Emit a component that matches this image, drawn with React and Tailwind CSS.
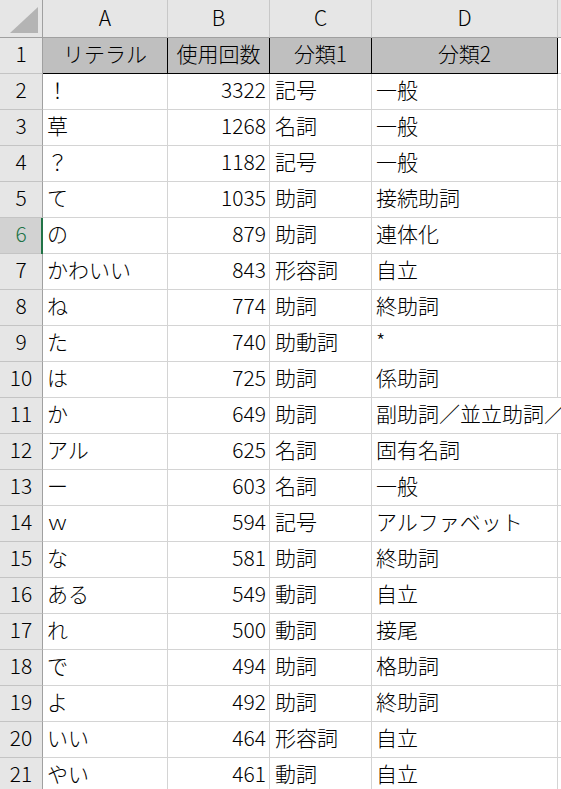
import React from "react";

const rows = [
  ["！", "3322", "記号", "一般"],
  ["草", "1268", "名詞", "一般"],
  ["？", "1182", "記号", "一般"],
  ["て", "1035", "助詞", "接続助詞"],
  ["の", "879", "助詞", "連体化"],
  ["かわいい", "843", "形容詞", "自立"],
  ["ね", "774", "助詞", "終助詞"],
  ["た", "740", "助動詞", "*"],
  ["は", "725", "助詞", "係助詞"],
  ["か", "649", "助詞", "副助詞／並立助詞／終助詞"],
  ["アル", "625", "名詞", "固有名詞"],
  ["ー", "603", "名詞", "一般"],
  ["ｗ", "594", "記号", "アルファベット"],
  ["な", "581", "助詞", "終助詞"],
  ["ある", "549", "動詞", "自立"],
  ["れ", "500", "動詞", "接尾"],
  ["で", "494", "助詞", "格助詞"],
  ["よ", "492", "助詞", "終助詞"],
  ["いい", "464", "形容詞", "自立"],
  ["やい", "461", "動詞", "自立"],
];

const gridCols = "grid grid-cols-[43px_125px_102px_102px_186px_1fr]";

export default function App() {
  return (
    <div
      className="w-[561px] h-[789px] overflow-hidden bg-white text-black text-[21px] font-light"
      style={{ fontFamily: '"Noto Sans CJK JP", "Noto Sans", sans-serif' }}
    >
      {/* column headers */}
      <div className={`${gridCols} h-[38px] bg-[#e6e6e6] leading-[34px]`}>
        <div className="border-r border-b border-[#a0a0a0] relative">
          <svg className="absolute right-[4px] bottom-[4px]" width="28" height="26" viewBox="0 0 28 26">
            <polygon points="28,0 28,26 0,26" fill="#b4b4b4" />
          </svg>
        </div>
        {["A", "B", "C", "D"].map((c) => (
          <div key={c} className="text-center border-r border-[#c8c8c8] border-b border-b-[#a0a0a0]">
            {c}
          </div>
        ))}
        <div className="border-b border-[#a0a0a0]" />
      </div>

      {/* row 1 header */}
      <div className={`${gridCols} h-[36px] leading-[31px]`}>
        <div className="bg-[#e6e6e6] text-center border-r border-r-[#a0a0a0] border-b border-b-[#c4c4c4]">1</div>
        <div className="bg-[#bfbfbf] text-center border-r border-b border-black">リテラル</div>
        <div className="bg-[#bfbfbf] text-center border-r border-b border-black">使用回数</div>
        <div className="bg-[#bfbfbf] text-center border-r border-b border-black">分類1</div>
        <div className="bg-[#bfbfbf] text-center border-r border-b border-black">分類2</div>
        <div className="border-b border-[#d4d4d4]" />
      </div>

      {rows.map((r, i) => {
        const n = i + 2;
        const sel = n === 6;
        const overflow = n === 11;
        return (
          <div key={n} className={`${gridCols} h-[36px] leading-[31px]`}>
            <div
              className={`text-center border-r border-r-[#a0a0a0] border-b border-b-[#c4c4c4] relative ${
                sel ? "bg-[#d2d2d2] text-[#217346]" : "bg-[#e6e6e6]"
              }`}
            >
              {n}
              {sel && <span className="absolute right-[-1px] top-0 w-[2px] h-[36px] bg-[#217346]" />}
            </div>
            <div className="pl-[4px] border-r border-b border-[#d4d4d4] whitespace-nowrap overflow-hidden">{r[0]}</div>
            <div className="pr-[3px] text-right border-r border-b border-[#d4d4d4]">{r[1]}</div>
            <div className="pl-[5px] border-r border-b border-[#d4d4d4] whitespace-nowrap">{r[2]}</div>
            <div
              className={`pl-[4px] border-b border-[#d4d4d4] whitespace-nowrap ${
                overflow ? "overflow-visible" : "border-r overflow-hidden"
              }`}
            >
              {r[3]}
            </div>
            <div className="border-b border-[#d4d4d4]" />
          </div>
        );
      })}
    </div>
  );
}
